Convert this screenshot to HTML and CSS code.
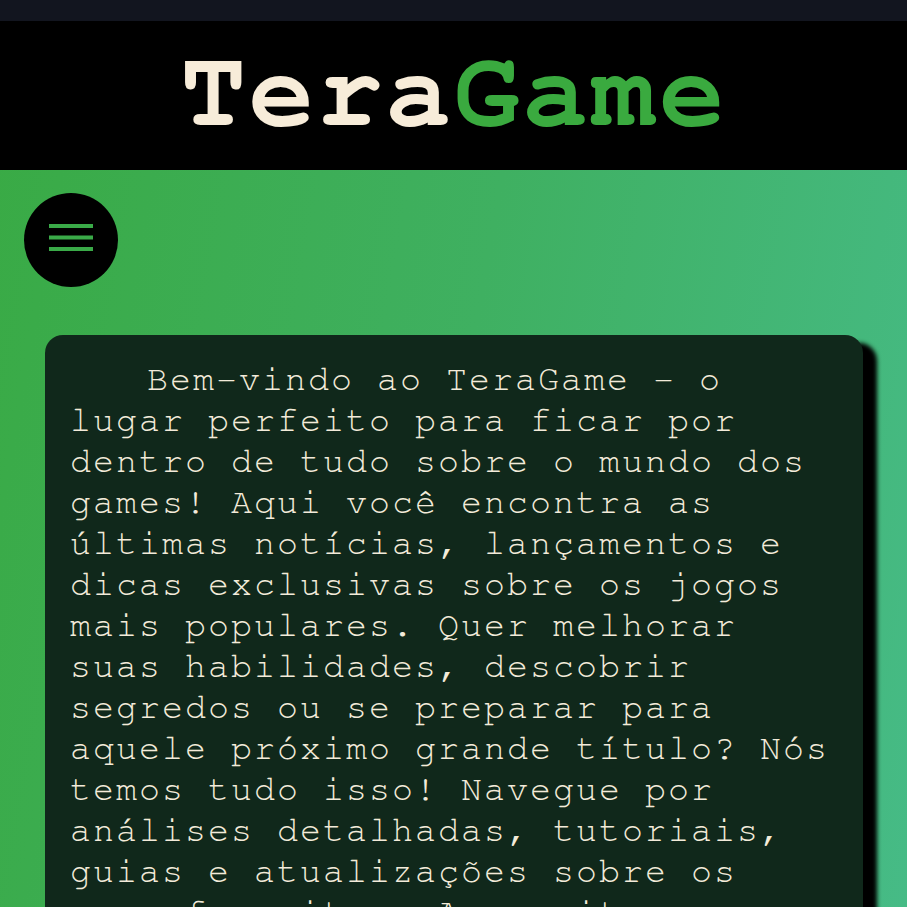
FILE: index.html
```html
<!DOCTYPE html>
<html lang="pt-BR">
<head>
<meta charset="utf-8">
<title>TeraGame</title>
<link rel="stylesheet" href="styles.css">
</head>
<body>
<div class="statusbar"></div>
<header class="header">
  <h1 class="logo"><span class="logo-tera">Tera</span><span class="logo-game">Game</span></h1>
</header>
<main class="main">
  <button class="menu-btn" aria-label="Menu">
    <svg width="44" height="28" viewBox="0 0 44 28"><rect x="0" y="0" width="44" height="4" fill="#3aaa48"/><rect x="0" y="11.5" width="44" height="4" fill="#3aaa48"/><rect x="0" y="23" width="44" height="4" fill="#3aaa48"/></svg>
  </button>
  <section class="card">
    <p class="intro">Bem-vindo ao TeraGame - o lugar perfeito para ficar por dentro de tudo sobre o mundo dos games! Aqui você encontra as últimas notícias, lançamentos e dicas exclusivas sobre os jogos mais populares. Quer melhorar suas habilidades, descobrir segredos ou se preparar para aquele próximo grande título? Nós temos tudo isso! Navegue por análises detalhadas, tutoriais, guias e atualizações sobre os seus favoritos. Aproveite e divirta-se!</p>
  </section>
</main>
</body>
</html>
```
FILE: styles.css
```css
html, body {
  margin: 0;
  padding: 0;
}
body {
  background: linear-gradient(100deg, #39aa44 0%, #3fb061 50%, #46bb86 100%);
  height: 907px;
  overflow: hidden;
  font-family: "Nimbus Mono PS", "Nimbus Mono L", "FreeMono", "Courier 10 Pitch", "Liberation Mono", monospace;
}
.statusbar {
  height: 21px;
  background: #12151f;
}
.header {
  height: 149px;
  background: #000;
  display: flex;
  align-items: center;
  justify-content: center;
}
.logo {
  margin: -6px 0 0 0;
  font-family: "Nimbus Mono PS", "Nimbus Mono L", "FreeMono", "Courier 10 Pitch", "Liberation Mono", monospace;
  font-weight: bold;
  font-size: 109px;
  letter-spacing: 3px;
  line-height: 1;
  padding-left: 1px;
}
.logo-tera { color: #f7ecd9; }
.logo-game { color: #3aaa3f; }
.main {
  padding: 23px 44px 0 24px;
}
.menu-btn {
  width: 94px;
  height: 94px;
  border-radius: 50%;
  background: #000;
  border: none;
  padding: 0;
  display: flex;
  align-items: center;
  justify-content: center;
}
.menu-btn svg { display: block; margin-top: -5px; }
.card {
  margin: 48px 0 0 21px;
  background: #10281b;
  border-radius: 18px;
  box-shadow: 14px 8px 4px #000;
  padding: 24px 25px 40px 25px;
}
.intro {
  margin: 0;
  color: #f3ebda;
  font-size: 35px;
  letter-spacing: 2px;
  line-height: 41px;
  text-indent: 77px;
}
```
